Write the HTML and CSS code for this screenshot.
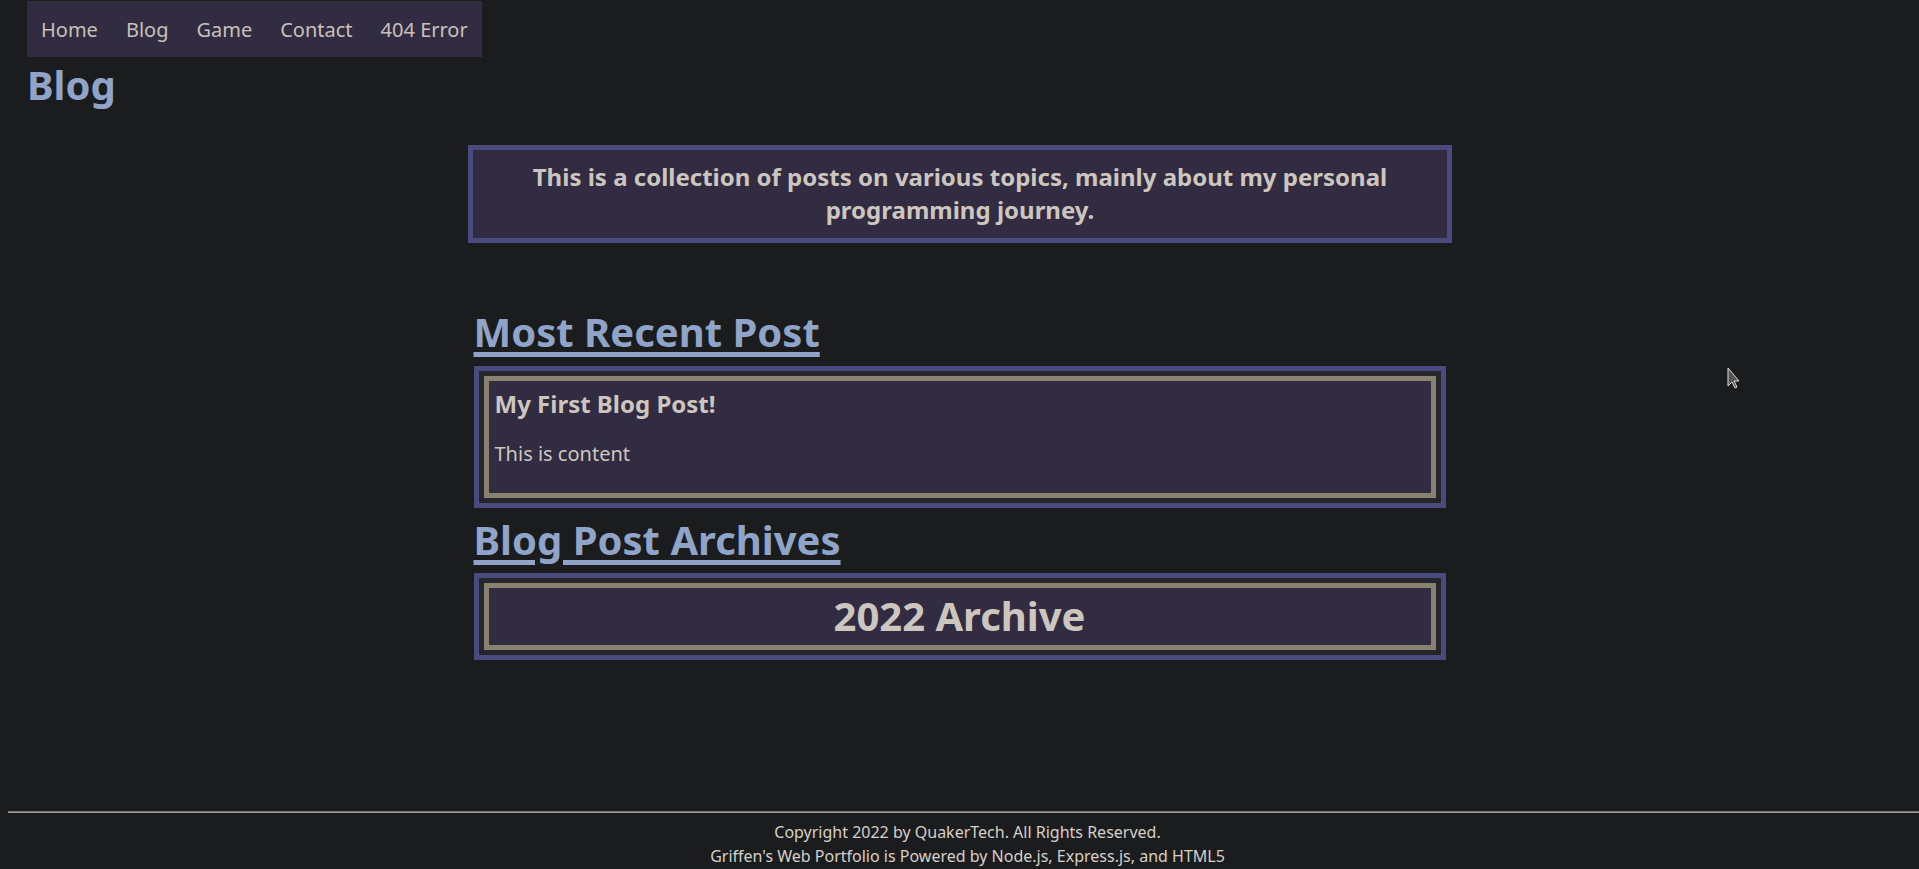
FILE: index.html
```html
<!DOCTYPE html>
<html lang="en">
<head>
<meta charset="utf-8">
<title>Blog</title>
<link rel="stylesheet" href="styles.css">
</head>
<body>
<header class="site-header">
  <nav class="nav">
    <a href="#">Home</a>
    <a href="#">Blog</a>
    <a href="#">Game</a>
    <a href="#">Contact</a>
    <a href="#">404 Error</a>
  </nav>
  <h1 class="page-title">Blog</h1>
</header>
<main class="main">
  <div class="intro">This is a collection of posts on various topics, mainly about my personal programming journey.</div>
  <section class="section">
    <h2 class="section-title first"><a href="#">Most Recent Post</a></h2>
    <div class="frame">
      <div class="frame-inner post">
        <h3 class="post-title">My First Blog Post!</h3>
        <p class="post-body">This is content</p>
      </div>
    </div>
    <h2 class="section-title"><a href="#">Blog Post Archives</a></h2>
    <div class="frame">
      <div class="frame-inner archive">
        <div class="archive-title">2022 Archive</div>
      </div>
    </div>
  </section>
</main>
<footer class="footer">
  <hr class="rule">
  <div class="footer-text">
    <p class="footer-line">Copyright 2022 by QuakerTech. All Rights Reserved.</p>
    <p class="footer-line">Griffen's Web Portfolio is Powered by Node.js, Express.js, and HTML5</p>
  </div>
</footer>
<svg class="cursor" width="16" height="24" viewBox="0 0 16 24"><path d="M1 1 L1 19 L5 15 L8 21 L10 20 L7 14 L12 14 Z" fill="#555" stroke="#ddd" stroke-width="1"/></svg>
</body>
</html>
```
FILE: styles.css
```css
html {
  height: 100%;
  overflow: hidden;
}
body {
  height: 100%;
  margin: 0 0 0 8px;
  background: #1b1c1e;
  font-family: "Noto Sans", "Open Sans", sans-serif;
  color: #cdc6bf;
  display: flex;
  flex-direction: column;
  min-height: 100vh;
  box-sizing: border-box;
}
.site-header {
  padding: 1px 0 0 19px;
}
.nav {
  display: inline-flex;
  background: #322c42;
}
.nav a {
  display: block;
  padding: 15px 14px 13px;
  font-size: 20px;
  line-height: 28px;
  color: #c9c1b9;
  text-decoration: none;
}
.page-title {
  margin: 0;
  font-size: 40px;
  line-height: 56px;
  font-weight: 700;
  color: #8fa4c8;
}
.main {
  flex: 1;
  display: flex;
  flex-direction: column;
  align-items: center;
  padding-right: 8px;
}
.intro {
  box-sizing: border-box;
  width: 984px;
  margin: 32px 0 0 1px;
  border: 5px solid #4a4a7e;
  background: #322c42;
  padding: 10px 20px 12px;
  text-align: center;
  font-size: 24px;
  font-weight: 700;
  color: #cdc6bf;
}
.section {
  width: 972px;
}
.section-title {
  margin: 8px 0 9px;
  font-size: 40px;
  font-weight: 700;
  line-height: 48px;
}
.section-title.first {
  margin-top: 65px;
  margin-bottom: 10px;
}
.section-title a {
  color: #8fa4c8;
  text-decoration: underline;
  text-decoration-thickness: 5px;
  text-underline-offset: 5px;
}
.frame {
  border: 5px solid #4a4a7e;
  padding: 5px;
  background: #26272b;
}
.frame-inner {
  border: 5px solid #8a8270;
  background: #322c42;
}
.post {
  padding: 6px;
}
.post-title {
  margin: 0 0 20px;
  font-size: 24px;
  font-weight: 700;
  color: #cdc6bf;
}
.post-body {
  margin: 0 0 20px;
  font-size: 20px;
  color: #cdc6bf;
}
.archive {
  padding: 4px 4px 5px;
  text-align: center;
}
.archive-title {
  font-size: 40px;
  line-height: 48px;
  font-weight: 700;
  color: #cdc6bf;
}
.footer {
  flex-shrink: 0;
  padding: 0 0 1px 8px;
  margin-left: -8px;
}
.footer-text {
  padding-left: 8px;
  text-align: center;
}
.rule {
  margin: 0 0 7px;
  border: 0;
  border-top: 1px solid #777;
  border-bottom: 1px solid #999;
  height: 0;
}
.footer-line {
  margin: 0;
  font-size: 16px;
  line-height: 24px;
  color: #d6d0c8;
}
.cursor {
  position: absolute;
  left: 1727px;
  top: 367px;
}
```
